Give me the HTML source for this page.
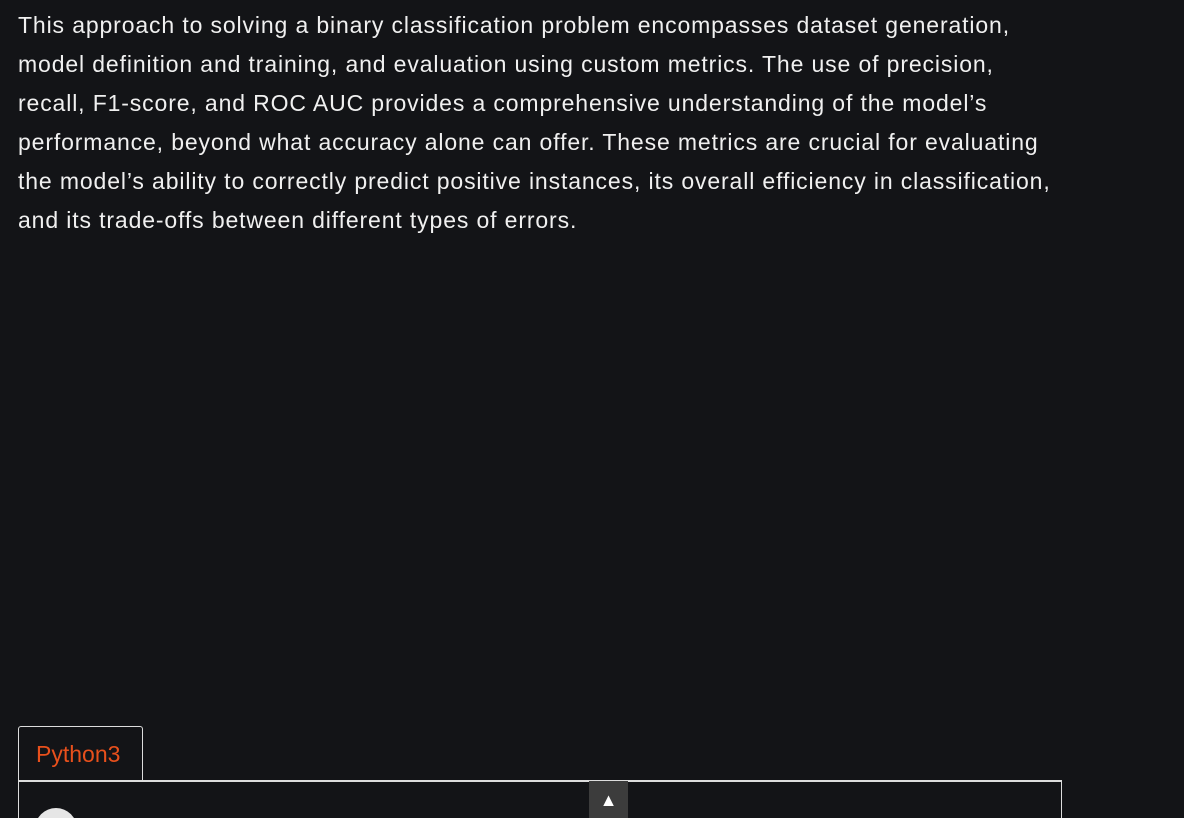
<!DOCTYPE html>
<html style="height:818px;overflow:hidden"><head><style>
body{margin:0;width:1184px;height:818px;background:#131417;overflow:hidden;position:relative;font-family:"Liberation Sans",sans-serif}
p{position:absolute;left:18px;top:6px;width:1150px;margin:0;color:#f0f0f0;font-size:23px;line-height:39px;letter-spacing:0.87px;white-space:nowrap}
.tab{position:absolute;left:18px;top:726px;width:125px;height:54px;border:1px solid #ddd;border-bottom:none;border-radius:3px 3px 0 0;color:#e8501c;font-size:23px;line-height:54px;text-indent:17px;box-sizing:border-box}
.box{position:absolute;left:18px;top:780px;width:1044px;height:38px;border:1px solid #ddd;border-top:2px solid #ddd;border-bottom:none;box-sizing:border-box}
.btn{position:absolute;left:589px;top:781px;width:39px;height:37px;background:#3c3c3c;color:#fff;text-align:center;font-size:18px;line-height:38px}
.c{position:absolute;left:35px;top:808px;width:42px;height:42px;border-radius:50%;background:#e6e6e6}
</style></head><body>
<p>This approach to solving a binary classification problem encompasses dataset generation,<br>model definition and training, and evaluation using custom metrics. The use of precision,<br>recall, F1-score, and ROC AUC provides a comprehensive understanding of the model’s<br>performance, beyond what accuracy alone can offer. These metrics are crucial for evaluating<br>the model’s ability to correctly predict positive instances, its overall efficiency in classification,<br>and its trade-offs between different types of errors.</p>
<div class="tab">Python3</div>
<div class="box"></div>
<div class="btn">▲</div>
<div class="c"></div>
</body></html>
